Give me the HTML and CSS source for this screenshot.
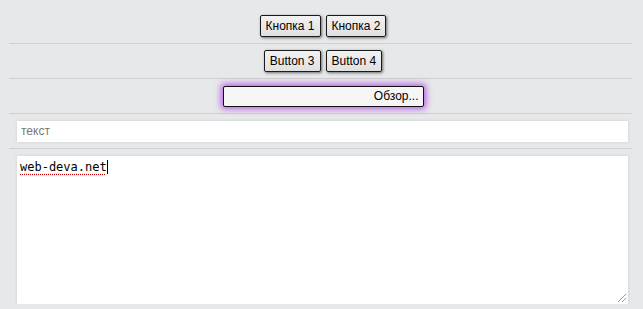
FILE: index.html
```html
<!DOCTYPE html>
<html>
<head>
	<meta charset="utf-8">
	<title>Форма</title>
	<link rel="stylesheet" href="styles.css">
</head>
<body>
	<div class="row row-center">
		<button class="btn">Кнопка 1</button>
		<button class="btn">Кнопка 2</button>
	</div>
	<div class="row row-center">
		<button class="btn">Button 3</button>
		<button class="btn">Button 4</button>
	</div>
	<div class="row row-center">
		<div class="file"><span>Обзор...</span></div>
	</div>
	<div class="row row-field">
		<input class="field" type="text" placeholder="текст">
	</div>
	<div class="row row-last">
		<div class="area"><span class="typed">web-deva.net</span><span class="caret"></span><span class="grip"></span></div>
	</div>
</body>
</html>
```

FILE: styles.css
```css
*{
	margin: 0px;
	padding: 0px;
	box-sizing: border-box;
}
body{
	background-color: #e7e8ea;
	font-family: Arial, "Liberation Sans", sans-serif;
	font-size: 12px;
	color: #000;
	padding: 0px 11px 0px 9px;
}
.row{
	display: flex;
	justify-content: center;
	gap: 5px;
	height: 35px;
	border-bottom: 1px solid #cfd0d2;
	align-items: center;
}
.row-center{
	padding-left: 5px;
}
.row:first-child{
	height: 44px;
	padding-top: 9px;
}
.btn{
	font-family: Arial, "Liberation Sans", sans-serif;
	font-size: 12px;
	height: 22px;
	padding: 0px 5px;
	background: linear-gradient(#f2f2f2, #e0e0e0);
	border: 1px solid #1a1a1a;
	border-radius: 2px;
	box-shadow: 1px 1px 3px rgba(0,0,0,.55);
	color: #000;
}
.file{
	width: 201px;
	height: 21px;
	background: #f6f6f6;
	border: 1px solid #111;
	border-radius: 2px;
	box-shadow: 0px 0px 6px 2px rgba(170, 60, 230, .8);
	display: flex;
	justify-content: flex-end;
	align-items: center;
	padding-right: 4px;
}
.row-field{
	padding: 0px 4px 0px 8px;
}
.field{
	width: 100%;
	height: 21px;
	border: none;
	background: #fff;
	box-shadow: 0px 0px 3px rgba(0,0,0,.12);
	font-family: Arial, "Liberation Sans", sans-serif;
	font-size: 12px;
	padding: 0px 4px;
	outline: none;
}
.field::placeholder{
	color: #777;
}
.row-last{
	border-bottom: none;
	height: auto;
	padding: 7px 4px 0px 8px;
}
.area{
	position: relative;
	width: 100%;
	height: 148px;
	background: #fff;
	box-shadow: 0px 0px 3px rgba(0,0,0,.12);
	font-family: "DejaVu Sans Mono", "Liberation Mono", monospace;
	font-size: 12px;
	padding: 4px 3px;
}
.typed{
	text-decoration: underline dotted #c00;
	text-underline-offset: 3px;
}
.caret{
	display: inline-block;
	width: 1px;
	height: 14px;
	background: #000;
	vertical-align: -3px;
}
.grip{
	position: absolute;
	right: 2px;
	bottom: 2px;
	width: 8px;
	height: 8px;
	background: linear-gradient(135deg, transparent 45%, #999 45%, #999 55%, transparent 55%, transparent 70%, #999 70%, #999 80%, transparent 80%);
}
```
